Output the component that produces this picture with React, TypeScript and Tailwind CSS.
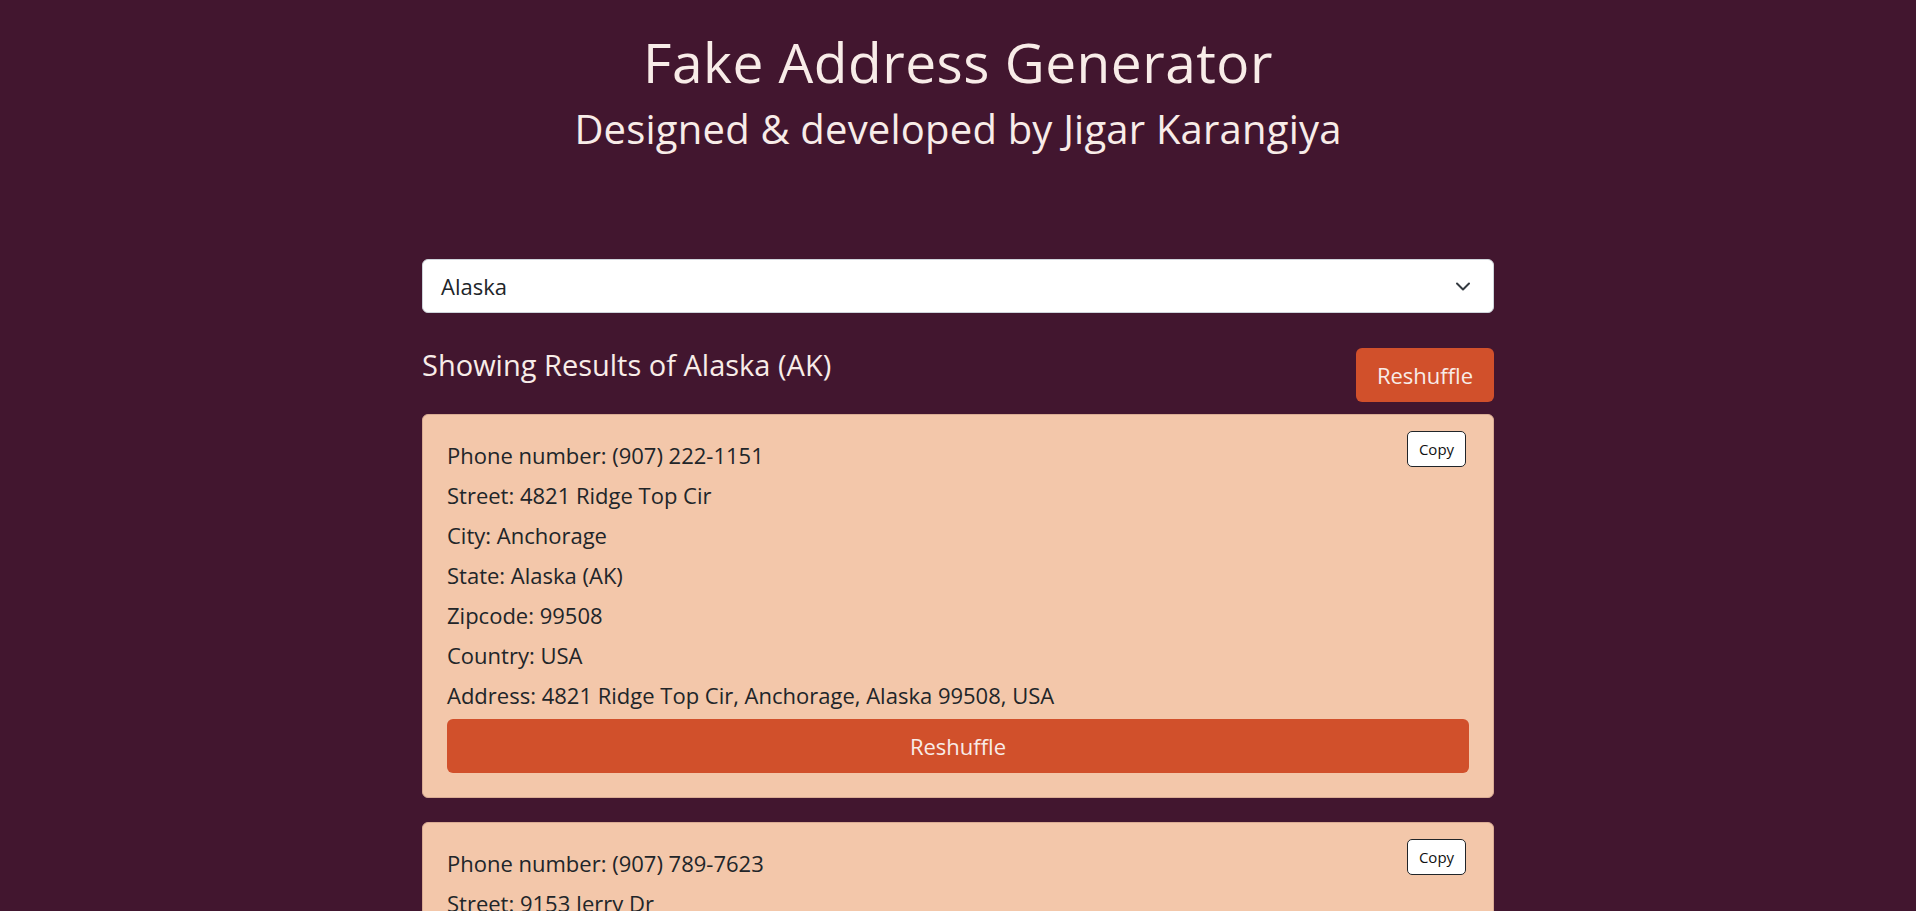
import React from "react";

type Addr = {
  phone: string;
  street: string;
  city: string;
  state: string;
  zip: string;
  country: string;
};

const data: Addr[] = [
  { phone: "(907) 222-1151", street: "4821 Ridge Top Cir", city: "Anchorage", state: "Alaska (AK)", zip: "99508", country: "USA" },
  { phone: "(907) 789-7623", street: "9153 Jerry Dr", city: "Juneau", state: "Alaska (AK)", zip: "99801", country: "USA" },
  { phone: "(907) 456-3327", street: "1205 Cushman St", city: "Fairbanks", state: "Alaska (AK)", zip: "99701", country: "USA" },
];

function Card({ a }: { a: Addr }) {
  const lines = [
    `Phone number: ${a.phone}`,
    `Street: ${a.street}`,
    `City: ${a.city}`,
    `State: ${a.state}`,
    `Zipcode: ${a.zip}`,
    `Country: ${a.country}`,
    `Address: ${a.street}, ${a.city}, ${a.state.replace(" (AK)", "")} ${a.zip}, ${a.country}`,
  ];
  return (
    <div className="relative bg-[#f3c7aa] border border-[#d9ab93] rounded-[6px] p-6 text-[#212529]">
      <button className="absolute top-[16px] right-[27px] w-[59px] h-[36px] bg-white border border-[#212529] rounded-[5px] text-[15px] leading-none text-[#111111]">
        Copy
      </button>
      <div className="flex flex-col">
        {lines.map((l, i) => (
          <p key={i} className="text-[22px] leading-[33px] mb-[7px]">
            {l}
          </p>
        ))}
      </div>
      <button className="w-full h-[54px] bg-[#d1502b] rounded-[6px] text-[22px] text-[#f8ece8]">
        Reshuffle
      </button>
    </div>
  );
}

export default function App() {
  return (
    <div className="min-h-screen bg-[#42162f] font-['Open_Sans',sans-serif] pb-10">
      <header className="text-center text-[#f8ece8] pt-[32px]">
        <h1 className="text-[55px] leading-[60px] tracking-[0.5px]">Fake Address Generator</h1>
        <h2 className="text-[40px] leading-[48px] mt-[13px] tracking-[0.2px]">Designed &amp; developed by Jigar Karangiya</h2>
      </header>
      <main className="w-[1072px] mx-auto mt-[106px]">
        <div className="h-[54px] bg-white border border-[#ced4da] rounded-[6px] flex items-center justify-between pl-[18px] pr-[22px] text-[22px] text-[#212529]">
          <span>Alaska</span>
          <svg width="16" height="11" viewBox="0 0 16 11" fill="none">
            <path d="M2 2.5l6 6 6-6" stroke="#343a40" strokeWidth="2" strokeLinecap="round" strokeLinejoin="round" />
          </svg>
        </div>
        <div className="flex items-start justify-between mt-[35px]">
          <h4 className="text-[29px] leading-[34px] text-[#f8ece8]">Showing Results of Alaska (AK)</h4>
          <button className="h-[54px] w-[138px] bg-[#d1502b] rounded-[6px] text-[22px] text-[#f8ece8]">
            Reshuffle
          </button>
        </div>
        <div className="flex flex-col gap-6 mt-3">
          {data.map((a, i) => (
            <Card key={i} a={a} />
          ))}
        </div>
      </main>
    </div>
  );
}
